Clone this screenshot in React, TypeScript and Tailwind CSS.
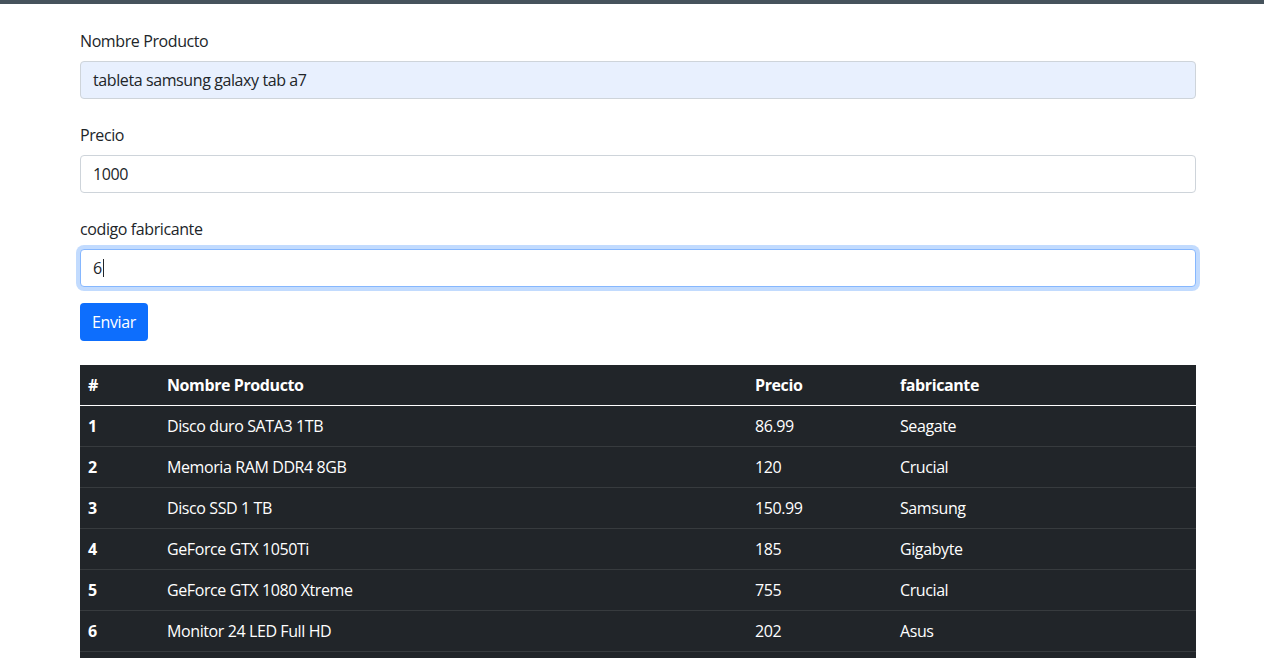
import React from "react";

const rows = [
  ["1", "Disco duro SATA3 1TB", "86.99", "Seagate"],
  ["2", "Memoria RAM DDR4 8GB", "120", "Crucial"],
  ["3", "Disco SSD 1 TB", "150.99", "Samsung"],
  ["4", "GeForce GTX 1050Ti", "185", "Gigabyte"],
  ["5", "GeForce GTX 1080 Xtreme", "755", "Crucial"],
  ["6", "Monitor 24 LED Full HD", "202", "Asus"],
  ["7", "Monitor 27 LED Full HD", "245.99", "Asus"],
];

export default function App() {
  return (
    <div
      className="min-h-screen bg-white text-[#212529] text-[16px] leading-[24px] tracking-[-0.4px]"
      style={{ fontFamily: '"Open Sans", "Noto Sans", sans-serif' }}
    >
      <div className="h-[4px] bg-[#46535c]" />
      <div className="ml-[80px] w-[1116px] pt-[25px]">
        <div className="mb-[8px] h-[24px]">Nombre Producto</div>
        <div className="mb-[24px] h-[38px] rounded-[4px] border border-[#ced4da] bg-[#e8f0fe] px-[12px] py-[6px] flex items-center">
          tableta samsung galaxy tab a7
        </div>
        <div className="mb-[8px] h-[24px]">Precio</div>
        <div className="mb-[24px] h-[38px] rounded-[4px] border border-[#ced4da] bg-white px-[12px] py-[6px] flex items-center">
          1000
        </div>
        <div className="mb-[8px] h-[24px]">codigo fabricante</div>
        <div className="mb-[16px] h-[38px] rounded-[4px] border border-[#86b7fe] bg-white px-[12px] py-[6px] flex items-center shadow-[0_0_0_4px_rgba(13,110,253,0.25)]">
          <span>6</span>
          <span className="ml-[1px] inline-block h-[18px] w-[1px] bg-[#212529]" />
        </div>
        <div className="mb-[24px] flex">
          <div className="h-[38px] rounded-[4px] bg-[#0d6efd] px-[12px] flex items-center text-white">
            Enviar
          </div>
        </div>
        <table className="w-full border-collapse bg-[#212529] text-white">
          <thead>
            <tr className="border-b border-b-white">
              <th className="w-[79px] h-[40px] px-[8px] text-left font-bold">#</th>
              <th className="w-[588px] px-[8px] text-left font-bold">Nombre Producto</th>
              <th className="w-[145px] px-[8px] text-left font-bold">Precio</th>
              <th className="px-[8px] text-left font-bold">fabricante</th>
            </tr>
          </thead>
          <tbody>
            {rows.map((r) => (
              <tr key={r[0]} className="border-b border-b-[#373b3e]">
                <td className="h-[41px] px-[8px] font-bold">{r[0]}</td>
                <td className="px-[8px]">{r[1]}</td>
                <td className="px-[8px]">{r[2]}</td>
                <td className="px-[8px]">{r[3]}</td>
              </tr>
            ))}
          </tbody>
        </table>
      </div>
    </div>
  );
}
